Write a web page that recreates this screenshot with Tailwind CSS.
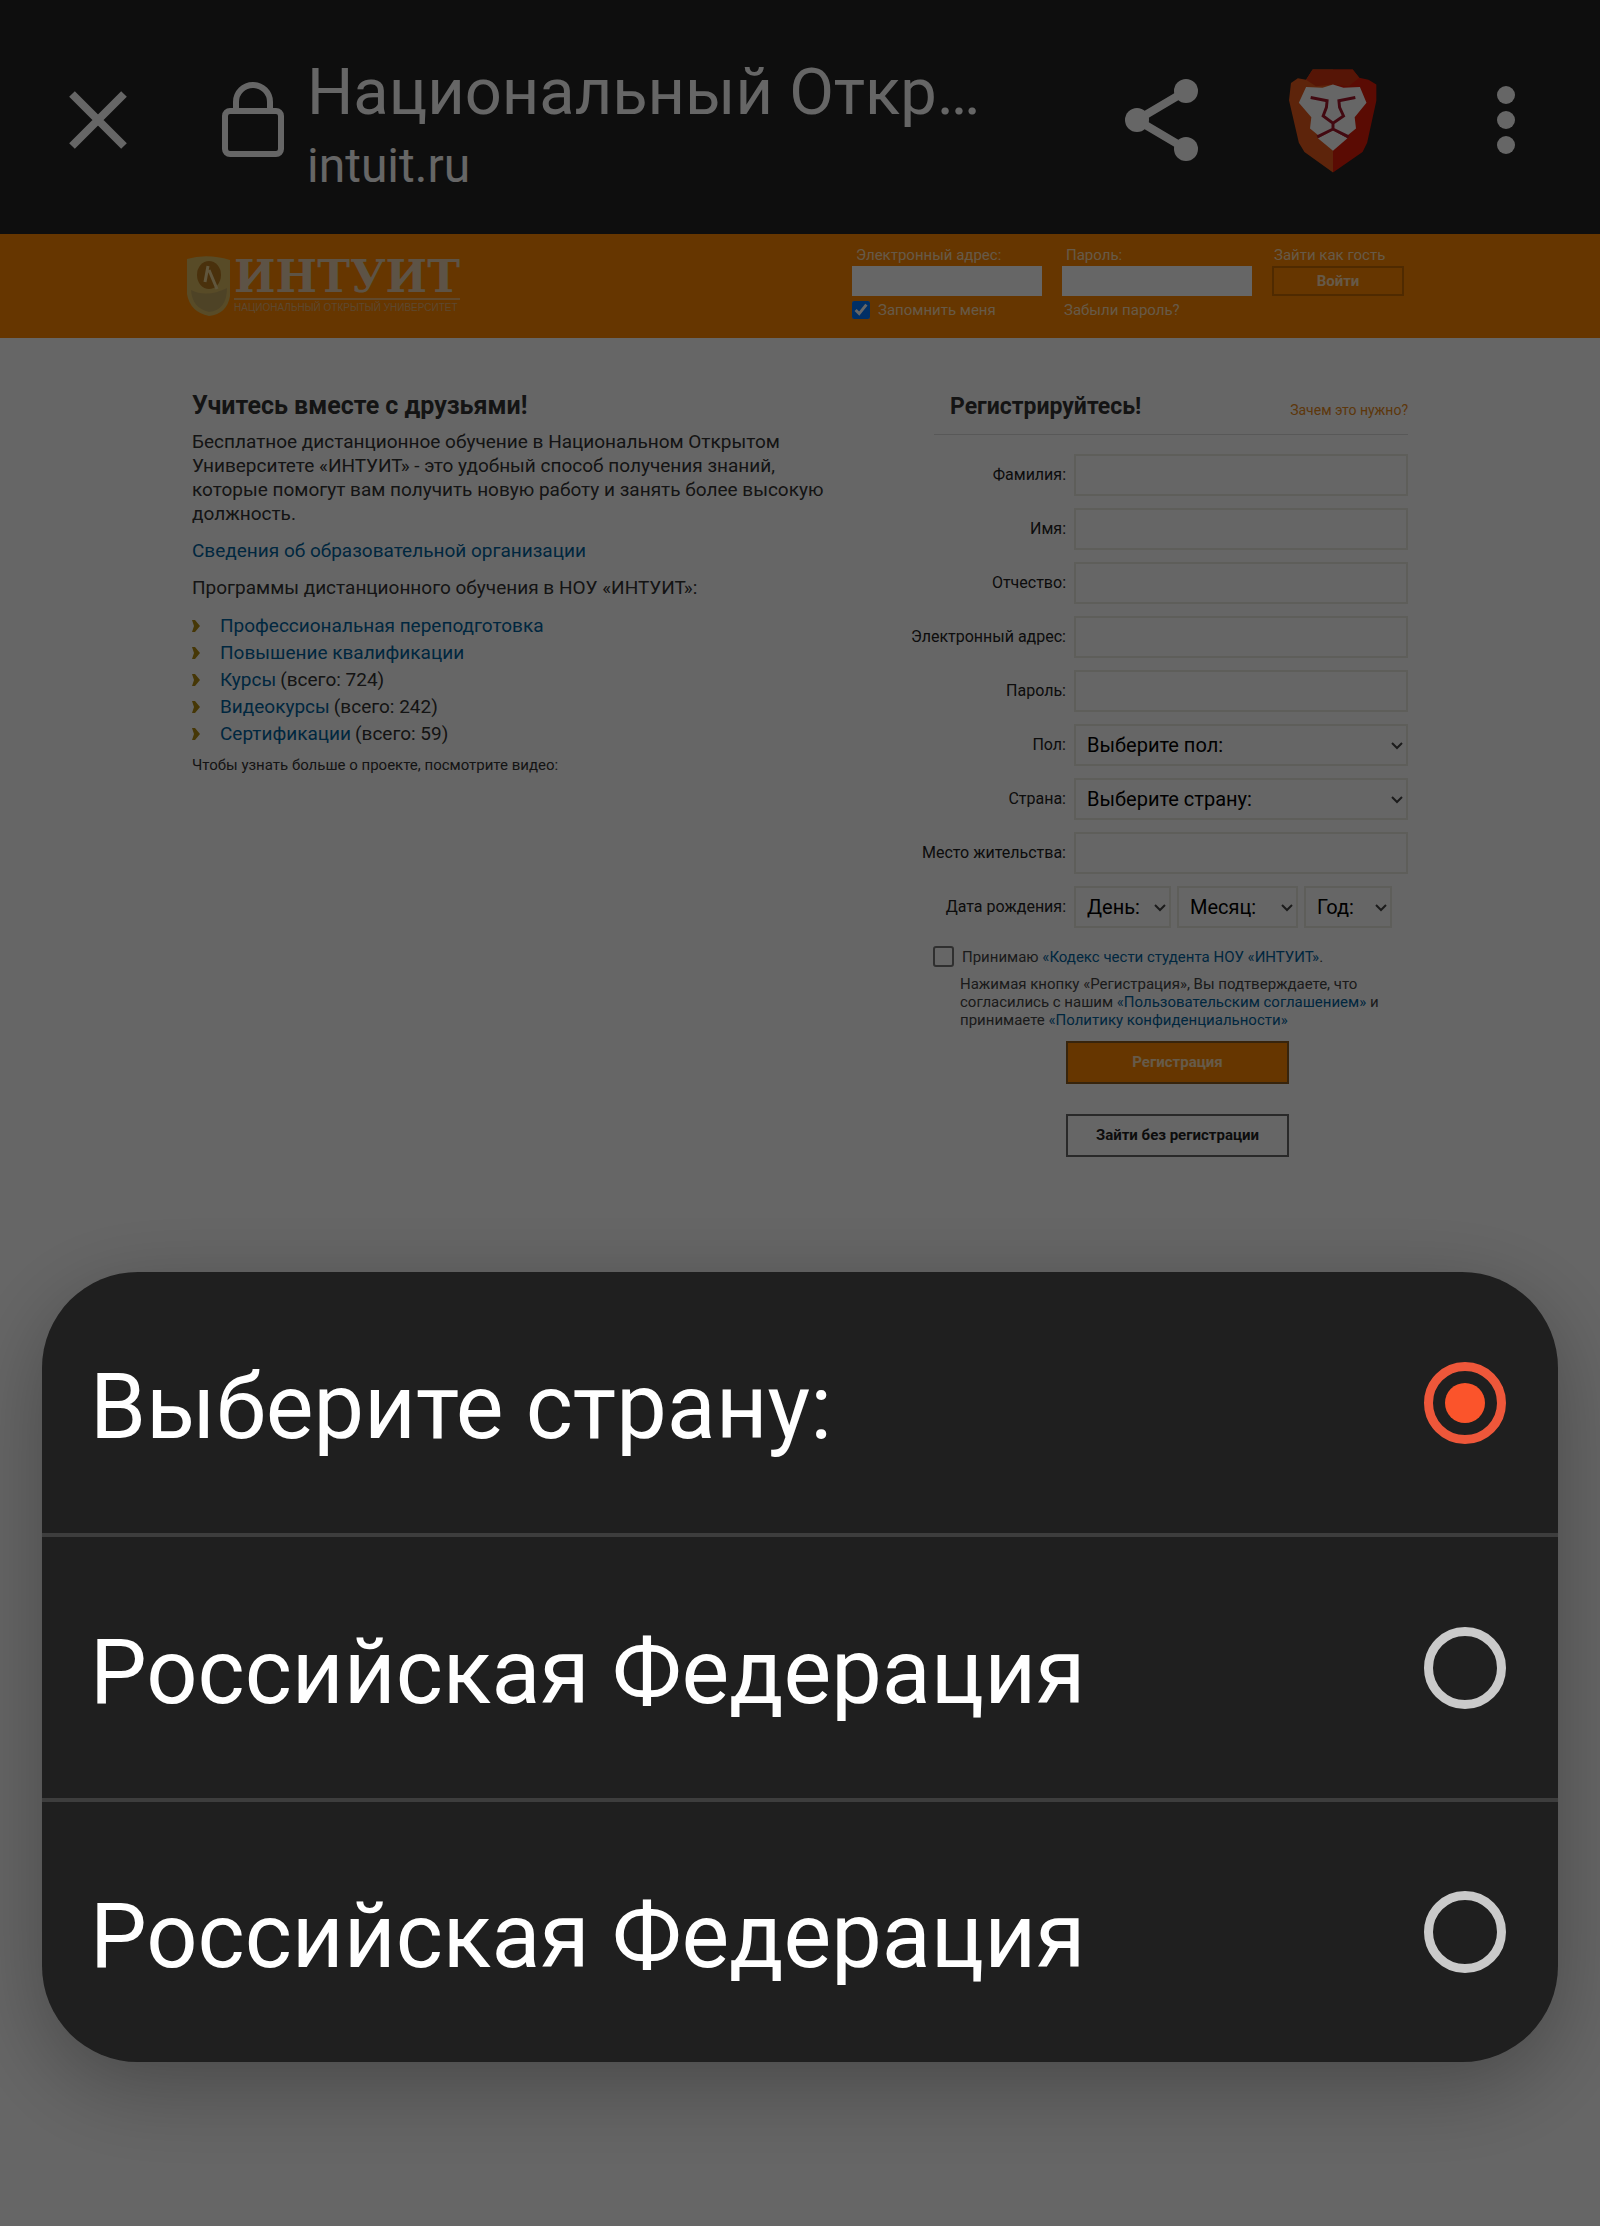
<!DOCTYPE html>
<html lang="ru">
<head>
  <meta charset="UTF-8" />
  <meta name="viewport" content="width=device-width, initial-scale=1.0" />
  <title>Национальный Открытый Университет «ИНТУИТ»</title>
  <script src="https://cdn.jsdelivr.net/npm/@tailwindcss/browser@4"></script>
</head>
<body class="bg-white text-[#333] font-[Roboto,sans-serif] min-h-screen">

  <!-- Browser toolbar -->
  <header class="bg-[#232323] text-white h-[234px] pt-[6px] pl-[69px] pr-[85px] flex items-center">
    <button aria-label="Закрыть" class="shrink-0">
      <svg class="w-[58px] h-[58px]" viewBox="0 0 58 58" fill="none" stroke="currentColor" stroke-width="8"><path d="M3 3 55 55M55 3 3 55"/></svg>
    </button>
    <svg class="w-16 h-[76px] ml-[94px] shrink-0" viewBox="0 0 64 76" fill="none" stroke="currentColor" stroke-width="6"><rect x="4" y="29" width="56" height="43" rx="5"/><path d="M15 29V20a17 17 0 0 1 34 0v9"/></svg>
    <div class="ml-[22px] pt-4 flex-1 min-w-0">
      <h1 class="text-[65px] leading-[76px] whitespace-nowrap">Национальный Откр…</h1>
      <p class="text-5xl leading-[72px]">intuit.ru</p>
    </div>
    <div class="flex items-center shrink-0">
      <button aria-label="Поделиться">
        <svg class="w-[74px] h-[82px]" viewBox="0 0 74 82" fill="currentColor"><path d="M12 41 61 12M12 41 61 70" stroke="currentColor" stroke-width="8"/><circle cx="12" cy="41" r="12"/><circle cx="61" cy="12" r="12"/><circle cx="61" cy="70" r="12"/></svg>
      </button>
      <button aria-label="Brave Shields" class="ml-[90px]">
        <svg class="w-[88px] h-[105px]" viewBox="618 113 268 318">
          <path fill="#e85a1c" d="M690 117H752V430L665 368 648 340 618 210 624 158 645 143 670 148Z"/>
          <path fill="#e01c08" d="M752 117H812L832 142 860 148 884 162 884 212 856 340 842 368 752 430Z"/>
          <path fill="#d8360f" d="M690 117H812L832 142 800 168 752 162 700 168 670 148Z"/>
          <path fill="#fff" d="M670 170 720 172 752 162 784 172 834 170 854 218 818 262 822 296 796 318 752 296 708 318 682 296 686 262 648 218Z"/>
          <path fill="#fff" d="M706 326 752 302 796 326 752 364Z"/>
          <path fill="none" stroke="#a5182c" stroke-width="9" d="M684 202 734 212 732 232 722 258 752 280 784 258 772 232 770 212 820 202M752 278V298M704 322 752 298 800 322"/>
        </svg>
      </button>
      <button aria-label="Меню" class="ml-[120px]">
        <svg class="w-[18px] h-[68px]" viewBox="0 0 18 68" fill="currentColor"><circle cx="9" cy="9" r="9"/><circle cx="9" cy="34" r="9"/><circle cx="9" cy="59" r="9"/></svg>
      </button>
    </div>
  </header>

  <!-- Site header -->
  <div class="bg-[#ff8800] h-[104px] px-[12%]">
    <div class="flex justify-between pt-[10px] -ml-[5px] pr-[4px] text-[#ffdfb5] text-[15px]">
      <a href="#" class="flex gap-1 pt-3">
        <svg class="w-[43px] h-[60px]" viewBox="0 0 43 60"><path fill="#dcbc62" d="M0 3Q20-3 43 4V40Q40 58 22 60 3 56 0 38Z"/><path fill="#c4a860" d="M4 34Q20 42 40 32 40 54 22 56 5 52 4 34Z"/><ellipse cx="22" cy="19" rx="12" ry="14" fill="#b87a20"/><path d="M21 10 18 26M22 14 30 33" stroke="#f0d898" stroke-width="3" fill="none"/></svg>
        <span class="flex flex-col">
          <span class="font-[DejaVu_Serif,serif] font-bold text-[44px] leading-[42px] border-b-2 border-[#efb56c] text-[#e8cfae]">ИНТУИТ</span>
          <span class="font-[Liberation_Sans,sans-serif] text-[10px] leading-4 whitespace-nowrap text-[#e8b377]">НАЦИОНАЛЬНЫЙ ОТКРЫТЫЙ УНИВЕРСИТЕТ</span>
        </span>
      </a>
      <form class="flex gap-5">
        <div class="w-[190px]">
          <label for="login" class="block leading-[22px] pl-1">Электронный адрес:</label>
          <input id="login" type="email" class="block w-full h-[30px] bg-white" />
          <div class="flex items-center gap-2 mt-1">
            <input id="remember" type="checkbox" checked class="w-[18px] h-[18px] accent-[#0075ff]" />
            <label for="remember" class="leading-5">Запомнить меня</label>
          </div>
        </div>
        <div class="w-[190px]">
          <label for="pass" class="block leading-[22px] pl-1">Пароль:</label>
          <input id="pass" type="password" class="block w-full h-[30px] bg-white" />
          <a href="#" class="block leading-5 mt-1 pl-[2px]">Забыли пароль?</a>
        </div>
        <div class="w-[132px]">
          <a href="#" class="block leading-[22px] pl-[2px] whitespace-nowrap">Зайти как гость</a>
          <button type="button" class="block w-full h-[30px] border-2 border-[#c56a00] font-bold">Войти</button>
        </div>
      </form>
    </div>
  </div>

  <!-- Page content -->
  <main class="px-[12%] pt-[52px] flex justify-between">
    <section class="w-[650px] text-[19px] leading-6">
      <h2 class="text-[25px] leading-8 font-bold">Учитесь вместе с друзьями!</h2>
      <p class="mt-2">Бесплатное дистанционное обучение в Национальном Открытом Университете «ИНТУИТ» - это удобный способ получения знаний, которые помогут вам получить новую работу и занять более высокую должность.</p>
      <p class="mt-[13px]"><a href="#" class="text-[#00629e]">Сведения об образовательной организации</a></p>
      <p class="mt-[13px]">Программы дистанционного обучения в НОУ «ИНТУИТ»:</p>
      <ul class="mt-3 leading-[27px]">
        <li class="flex items-center"><svg class="w-2 h-3 mr-5" viewBox="0 0 8 12" fill="#b08a10"><path d="M0 0H3L8 6 3 12H0L2 6Z"/></svg><a href="#" class="text-[#00629e]">Профессиональная переподготовка</a></li>
        <li class="flex items-center"><svg class="w-2 h-3 mr-5" viewBox="0 0 8 12" fill="#b08a10"><path d="M0 0H3L8 6 3 12H0L2 6Z"/></svg><a href="#" class="text-[#00629e]">Повышение квалификации</a></li>
        <li class="flex items-center"><svg class="w-2 h-3 mr-5" viewBox="0 0 8 12" fill="#b08a10"><path d="M0 0H3L8 6 3 12H0L2 6Z"/></svg><a href="#" class="text-[#00629e] mr-1">Курсы</a> (всего: 724)</li>
        <li class="flex items-center"><svg class="w-2 h-3 mr-5" viewBox="0 0 8 12" fill="#b08a10"><path d="M0 0H3L8 6 3 12H0L2 6Z"/></svg><a href="#" class="text-[#00629e] mr-1">Видеокурсы</a> (всего: 242)</li>
        <li class="flex items-center"><svg class="w-2 h-3 mr-5" viewBox="0 0 8 12" fill="#b08a10"><path d="M0 0H3L8 6 3 12H0L2 6Z"/></svg><a href="#" class="text-[#00629e] mr-1">Сертификации</a> (всего: 59)</li>
      </ul>
      <p class="mt-[6px] text-[15px]">Чтобы узнать больше о проекте, посмотрите видео:</p>
    </section>

    <section class="w-[504px] text-base text-[#222]">
      <div class="ml-[30px] pl-4 h-[45px] flex justify-between border-b border-[#ddd] whitespace-nowrap">
        <h2 class="text-[23px] leading-[34px] font-bold text-[#333]">Регистрируйтесь!</h2>
        <a href="#" class="text-sm leading-10 text-[#e88a20]">Зачем это нужно?</a>
      </div>
      <form class="mt-[19px]">
        <div class="grid grid-cols-[162px_1fr] gap-x-2 gap-y-3 items-center text-right">
          <label for="surname">Фамилия:</label>
          <input id="surname" class="h-[42px] w-full border-2 border-[#ecece0] px-3 text-xl" />
          <label for="name">Имя:</label>
          <input id="name" class="h-[42px] w-full border-2 border-[#ecece0] px-3 text-xl" />
          <label for="patronymic">Отчество:</label>
          <input id="patronymic" class="h-[42px] w-full border-2 border-[#ecece0] px-3 text-xl" />
          <label for="email" class="whitespace-nowrap">Электронный адрес:</label>
          <input id="email" type="email" class="h-[42px] w-full border-2 border-[#ecece0] px-3 text-xl" />
          <label for="password">Пароль:</label>
          <input id="password" type="password" class="h-[42px] w-full border-2 border-[#ecece0] px-3 text-xl" />
          <label for="sex">Пол:</label>
          <div class="relative">
            <select id="sex" class="appearance-none h-[42px] w-full border-2 border-[#ecece0] px-[11px] text-xl text-black"><option>Выберите пол:</option></select>
            <svg class="absolute right-[5px] top-[18px] w-3 h-2 pointer-events-none" viewBox="0 0 12 8" fill="none" stroke="#444" stroke-width="2"><path d="M1 1 6 6 11 1"/></svg>
          </div>
          <label for="country">Страна:</label>
          <div class="relative">
            <select id="country" class="appearance-none h-[42px] w-full border-2 border-[#ecece0] px-[11px] text-xl text-black"><option>Выберите страну:</option><option>Российская Федерация</option></select>
            <svg class="absolute right-[5px] top-[18px] w-3 h-2 pointer-events-none" viewBox="0 0 12 8" fill="none" stroke="#444" stroke-width="2"><path d="M1 1 6 6 11 1"/></svg>
          </div>
          <label for="city" class="whitespace-nowrap">Место жительства:</label>
          <input id="city" class="h-[42px] w-full border-2 border-[#ecece0] px-3 text-xl" />
          <label for="day">Дата рождения:</label>
          <div class="flex gap-[6px]">
            <div class="relative w-[97px]">
              <select id="day" class="appearance-none h-[42px] w-full border-2 border-[#ecece0] px-[11px] text-xl text-black"><option>День:</option></select>
              <svg class="absolute right-[5px] top-[18px] w-3 h-2 pointer-events-none" viewBox="0 0 12 8" fill="none" stroke="#444" stroke-width="2"><path d="M1 1 6 6 11 1"/></svg>
            </div>
            <div class="relative w-[121px]">
              <select aria-label="Месяц" class="appearance-none h-[42px] w-full border-2 border-[#ecece0] px-[11px] text-xl text-black"><option>Месяц:</option></select>
              <svg class="absolute right-[5px] top-[18px] w-3 h-2 pointer-events-none" viewBox="0 0 12 8" fill="none" stroke="#444" stroke-width="2"><path d="M1 1 6 6 11 1"/></svg>
            </div>
            <div class="relative w-[88px]">
              <select aria-label="Год" class="appearance-none h-[42px] w-full border-2 border-[#ecece0] px-[11px] text-xl text-black"><option>Год:</option></select>
              <svg class="absolute right-[5px] top-[18px] w-3 h-2 pointer-events-none" viewBox="0 0 12 8" fill="none" stroke="#444" stroke-width="2"><path d="M1 1 6 6 11 1"/></svg>
            </div>
          </div>
        </div>

        <div class="ml-[29px] mt-[18px] flex items-center gap-2 text-[15px] text-[#444]">
          <input id="accept" type="checkbox" class="appearance-none w-[21px] h-[21px] border-2 border-[#767676] rounded-[3px]" />
          <label for="accept" class="leading-5 whitespace-nowrap">Принимаю <a href="#" class="text-[#00629e]">«Кодекс чести студента НОУ «ИНТУИТ»</a>.</label>
        </div>
        <p class="ml-14 mt-2 text-[15px] leading-[18px] text-[#444]">Нажимая кнопку «Регистрация», Вы подтверждаете, что<br />согласились с нашим <a href="#" class="text-[#00629e]">«Пользовательским соглашением»</a> и<br />принимаете <a href="#" class="text-[#00629e]">«Политику конфиденциальности»</a></p>
        <button type="button" class="block ml-[162px] mt-3 w-[223px] h-[43px] bg-[#ff8800] border-2 border-[#8a5a20] text-[15px] font-bold text-[#ffe2b8]">Регистрация</button>
        <button type="button" class="block ml-[162px] mt-[30px] w-[223px] h-[43px] border-2 border-[#666] text-[15px] font-bold text-[#222]">Зайти без регистрации</button>
      </form>
    </section>
  </main>

  <!-- Country picker -->
  <div class="fixed inset-0 bg-black/60 flex items-end px-[42px] pb-[164px]">
    <div role="dialog" aria-label="Страна" class="w-full bg-[#1f1f1f] text-white text-[90px] leading-[100px] rounded-[96px] overflow-hidden divide-y-4 divide-[#3d3d3d] shadow-[0_24px_90px_rgba(0,0,0,0.3)]">
      <label class="flex items-center justify-between h-[265px] pl-12 pr-[52px]">
        <span class="pt-[10px]">Выберите страну:</span>
        <input type="radio" name="pick" checked class="appearance-none w-[82px] h-[82px] rounded-full border-[9px] border-[#cacaca] checked:border-[#ee573a] checked:bg-[#fb542b] bg-clip-content p-3" />
      </label>
      <label class="flex items-center justify-between h-[265px] pl-12 pr-[52px]">
        <span class="pt-[10px]">Российская Федерация</span>
        <input type="radio" name="pick" class="appearance-none w-[82px] h-[82px] rounded-full border-[9px] border-[#cacaca] checked:border-[#ee573a] checked:bg-[#fb542b] bg-clip-content p-3" />
      </label>
      <label class="flex items-center justify-between h-[260px] pl-12 pr-[52px]">
        <span class="pt-[10px]">Российская Федерация</span>
        <input type="radio" name="pick" class="appearance-none w-[82px] h-[82px] rounded-full border-[9px] border-[#cacaca] checked:border-[#ee573a] checked:bg-[#fb542b] bg-clip-content p-3" />
      </label>
    </div>
  </div>

</body>
</html>
